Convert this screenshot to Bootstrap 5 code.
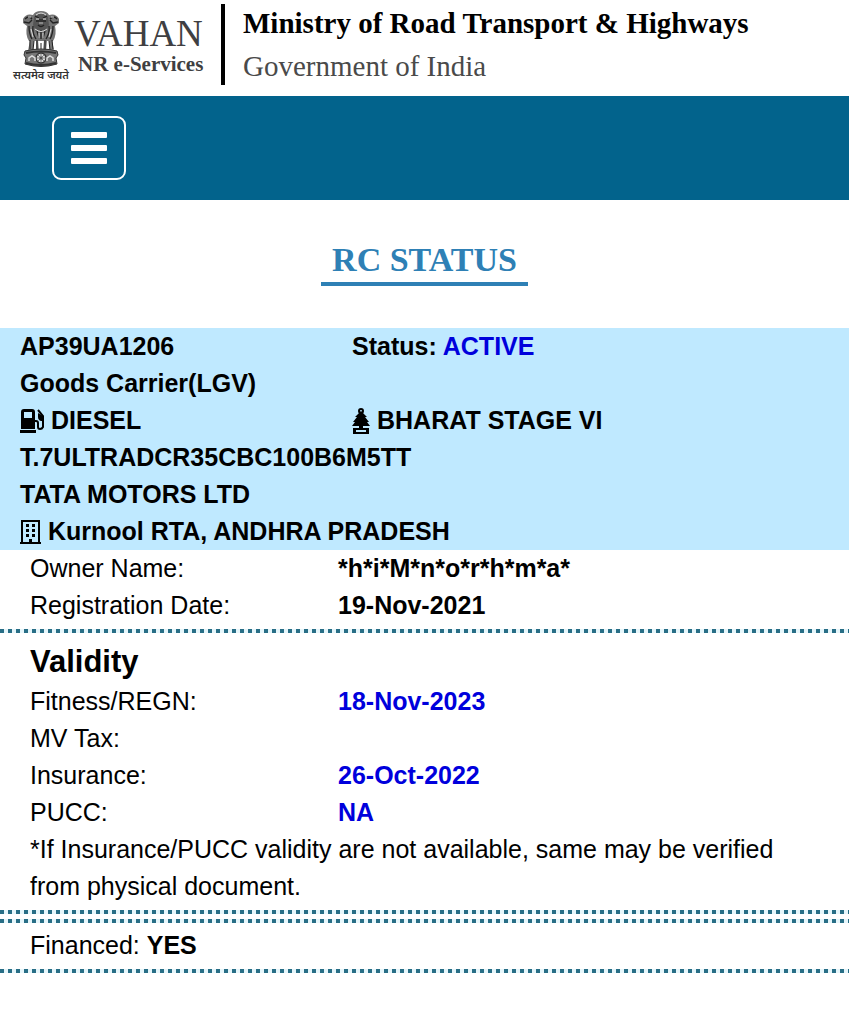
<!DOCTYPE html>
<html lang="en">
<head>
<meta charset="utf-8">
<meta name="viewport" content="width=device-width, initial-scale=1">
<title>VAHAN NR e-Services - RC Status</title>
<link href="https://cdn.jsdelivr.net/npm/bootstrap@5.3.0/dist/css/bootstrap.min.css" rel="stylesheet">
<style>
  body { font-family: "Liberation Sans", Arial, sans-serif; font-size: 25px; line-height: 37px; color: #000; background: #fff; }
  .site-head { height: 96px; font-family: "Liberation Serif", "Times New Roman", serif; }
  .emblem { width: 58px; margin: 10px 4px 0 12px; }
  .emblem svg { width: 40px; height: 58px; }
  .motto { font-family: "Noto Sans Devanagari", "Noto Sans", sans-serif; font-size: 11px; line-height: 16px; font-weight: 600; color: #333; white-space: nowrap; }
  .brand-text { width: 147px; margin-top: 15px; color: #3f3f42; white-space: nowrap; }
  .brand-name { font-size: 37px; line-height: 38px; }
  .brand-sub { font-size: 21px; line-height: 22px; font-weight: 700; padding-left: 4px; }
  .head-rule { width: 4px; height: 81px; margin: 4px 18px 0 0; background: #000; }
  .ministry { font-size: 29px; line-height: 43px; font-weight: 700; margin-top: 2px; }
  .government { font-size: 29px; line-height: 43px; color: #4a4a4a; }
  .main-bar { background: #02638c; height: 104px; padding: 0 52px; }
  .menu-btn { width: 74px; height: 64px; border: 2px solid #fff; border-radius: 9px; padding: 0; }
  .page-title { font-family: "Liberation Serif", "Times New Roman", serif; font-size: 34px; line-height: 44px; font-weight: 700; color: #2e80b5; border-bottom: 4px solid #2e80b5; padding: 0 11px; margin: 38px 0 42px; }
  .summary { background: #bfe9ff; padding: 0 20px; font-weight: 700; }
  .summary svg { height: 26px; flex: none; }
  .icon-line { gap: 7px; }
  .first-col { width: 332px; flex: none; }
  .details { padding: 0 30px; }
  .details dt { width: 308px; font-weight: 400; flex: none; }
  .details dd { font-weight: 700; margin: 0; }
  .active-text { color: #0000dc; }
  .section-title { font-size: 31px; line-height: 42px; font-weight: 700; }
  .dots { height: 4px; margin-top: 5px; background: repeating-linear-gradient(90deg, #286e86 0 4px, #e6f6fb 4px 8px); }
</style>
</head>
<body>
<header class="site-head d-flex">
  <div class="emblem d-flex flex-column align-items-center flex-shrink-0">
    <svg viewBox="0 0 40 58" role="img" aria-label="State Emblem of India">
      <path d="M12 5 Q14 1 20 1 Q26 1 28 5 Q35 3 38 9 L38 13 L34 16 Q36 25 32 31 L8 31 Q4 25 6 16 L2 13 L2 9 Q5 3 12 5Z" fill="#737373"/>
      <path d="M13 7q7-7 14 0l1 8-3 6h-10l-3-6z" fill="#555"/>
      <path d="M4 9q4-4 7 0M3 12l5 1 3-3M29 9q4-4 7 0M37 12l-5 1-3-3M14 6l4 2M26 6l-4 2M15 11h3M22 11h3M17 15q3 3 6 0M19 9v5M21 9v5M8 16q0 8 3 13M12 16q-1 7 3 13M32 16q0 8-3 13M28 16q1 7-3 13M16 21l2 7M24 21l-2 7M20 20v9" fill="none" stroke="#222" stroke-width="1.3"/>
      <path d="M15 5q5-4 10 0M15 9h3M22 9h3M18 13h4M14 19q6 5 12 0M7 7h3M30 7h3M10 19l2 8M30 19l-2 8M18 23v5M22 23v5" fill="none" stroke="#ddd" stroke-width="1"/>
      <path d="M9 30l-2 11h5l1-11zM15 30v11h3l-1-11zM23 30l-1 11h3l1-11zM28 30l1 11h4l-2-11z" fill="#777"/>
      <path d="M9 30v9M13 31l-1 9M16 30v10M24 30v10M28 31l1 9M31 30l1 9M20 33v6" stroke="#222" stroke-width="1" fill="none"/>
      <path d="M4 41Q20 37 36 41L37 45 35 48 36 54Q20 59 4 54L5 48 3 45Z" fill="#777" stroke="#333"/>
      <path d="M5 43q15-3 30 0M5 53q15 4 30 0" fill="none" stroke="#333" stroke-width="2"/>
      <circle cx="20" cy="48" r="5" fill="#ddd" stroke="#333" stroke-width="1.4"/>
      <circle cx="20" cy="48" r="1.5" fill="#333"/>
      <path d="M20 43v10M15 48h10M16.500 44.500l7 7M23.500 44.500l-7 7" stroke="#555" stroke-width=".7"/>
      <path d="M8 51v-3l3-2 3 2v3M26 51v-3l3-2 3 2v3" fill="none" stroke="#ddd" stroke-width="1.500"/>
    </svg>
    <div class="motto" lang="hi">सत्यमेव जयते</div>
  </div>
  <div class="brand-text flex-shrink-0">
    <div class="brand-name">VAHAN</div>
    <div class="brand-sub">NR e-Services</div>
  </div>
  <div class="head-rule flex-shrink-0"></div>
  <div>
    <div class="ministry">Ministry of Road Transport &amp; Highways</div>
    <div class="government">Government of India</div>
  </div>
</header>
<nav class="main-bar d-flex align-items-center">
  <button type="button" class="menu-btn btn d-flex align-items-center justify-content-center" aria-label="Menu">
    <svg width="36" height="32" viewBox="0 0 36 32" fill="#fff"><rect width="36" height="6" rx="1"/><rect y="13" width="36" height="6" rx="1"/><rect y="26" width="36" height="6" rx="1"/></svg>
  </button>
</nav>
<main>
  <div class="d-flex justify-content-center"><h1 class="page-title">RC STATUS</h1></div>
  <section class="summary">
    <div class="d-flex"><div class="first-col">AP39UA1206</div><div>Status: <span class="active-text">ACTIVE</span></div></div>
    <div>Goods Carrier(LGV)</div>
    <div class="d-flex">
      <div class="first-col icon-line d-flex align-items-center">
        <svg width="24" viewBox="0 0 24 26"><path fill-rule="evenodd" d="M1 21V4q0-3 3-3h8q3 0 3 3v17zM4 4v6h8V4z"/><path d="M0 22h16v3H0z"/><path d="M15 13h1q2 0 2 2v4q0 2 2 2t3-2V8l-5-6" fill="none" stroke="#000" stroke-width="2"/><path d="M18 5l5 3v5h-2q-3-1-3-4z"/></svg>
        <span>DIESEL</span>
      </div>
      <div class="icon-line d-flex align-items-center">
        <svg width="18" viewBox="0 0 18 26"><path d="M9 3L3 9h2l-4 5h2l-3 4h7v2H1v6h16v-6h-6v-2h7l-3-4h2l-4-5h2z"/><circle cx="9" cy="3" r="2" fill="none" stroke="#000" stroke-width="2"/><path d="M4 22h10v2H4z" fill="#bfe9ff"/></svg>
        <span>BHARAT STAGE VI</span>
      </div>
    </div>
    <div>T.7ULTRADCR35CBC100B6M5TT</div>
    <div>TATA MOTORS LTD</div>
    <div class="icon-line d-flex align-items-center">
      <svg width="21" viewBox="0 0 21 26"><path d="M2 24V2h17v22M0 24h21" fill="none" stroke="#000" stroke-width="2"/><path d="M6 5h3v3H6zM12 5h3v3h-3zM6 10h3v3H6zM12 10h3v3h-3zM6 15h3v3H6zM12 15h3v3h-3zM9 20h3v4H9z"/></svg>
      <span>Kurnool RTA, ANDHRA PRADESH</span>
    </div>
  </section>
  <dl class="details mb-0">
    <div class="d-flex"><dt>Owner Name:</dt><dd>*h*i*M*n*o*r*h*m*a*</dd></div>
    <div class="d-flex"><dt>Registration Date:</dt><dd>19-Nov-2021</dd></div>
  </dl>
  <div class="dots"></div>
  <section class="details pt-1">
    <h2 class="section-title mt-1 mb-0">Validity</h2>
    <dl class="mb-0">
      <div class="d-flex"><dt>Fitness/REGN:</dt><dd class="active-text">18-Nov-2023</dd></div>
      <div class="d-flex"><dt>MV Tax:</dt><dd></dd></div>
      <div class="d-flex"><dt>Insurance:</dt><dd class="active-text">26-Oct-2022</dd></div>
      <div class="d-flex"><dt>PUCC:</dt><dd class="active-text">NA</dd></div>
    </dl>
    <p class="mb-0">*If Insurance/PUCC validity are not available, same may be verified from physical document.</p>
  </section>
  <div class="dots"></div>
  <div class="dots"></div>
  <div class="details pt-1">Financed: <strong>YES</strong></div>
  <div class="dots"></div>
</main>
<script src="https://cdn.jsdelivr.net/npm/bootstrap@5.3.0/dist/js/bootstrap.bundle.min.js"></script>
</body>
</html>
